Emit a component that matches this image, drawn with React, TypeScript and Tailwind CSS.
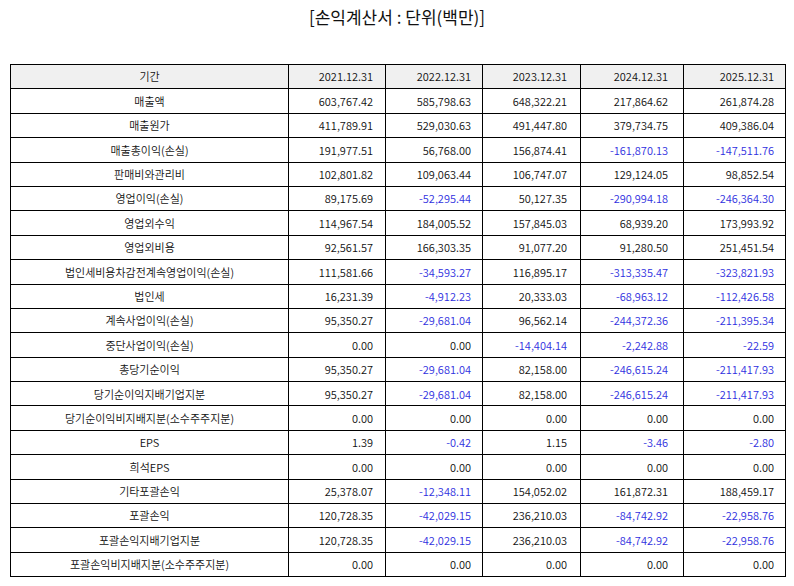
const ROWS: [string, string[]][] = [
  ["매출액", ["603,767.42", "585,798.63", "648,322.21", "217,864.62", "261,874.28"]],
  ["매출원가", ["411,789.91", "529,030.63", "491,447.80", "379,734.75", "409,386.04"]],
  ["매출총이익(손실)", ["191,977.51", "56,768.00", "156,874.41", "-161,870.13", "-147,511.76"]],
  ["판매비와관리비", ["102,801.82", "109,063.44", "106,747.07", "129,124.05", "98,852.54"]],
  ["영업이익(손실)", ["89,175.69", "-52,295.44", "50,127.35", "-290,994.18", "-246,364.30"]],
  ["영업외수익", ["114,967.54", "184,005.52", "157,845.03", "68,939.20", "173,993.92"]],
  ["영업외비용", ["92,561.57", "166,303.35", "91,077.20", "91,280.50", "251,451.54"]],
  ["법인세비용차감전계속영업이익(손실)", ["111,581.66", "-34,593.27", "116,895.17", "-313,335.47", "-323,821.93"]],
  ["법인세", ["16,231.39", "-4,912.23", "20,333.03", "-68,963.12", "-112,426.58"]],
  ["계속사업이익(손실)", ["95,350.27", "-29,681.04", "96,562.14", "-244,372.36", "-211,395.34"]],
  ["중단사업이익(손실)", ["0.00", "0.00", "-14,404.14", "-2,242.88", "-22.59"]],
  ["총당기순이익", ["95,350.27", "-29,681.04", "82,158.00", "-246,615.24", "-211,417.93"]],
  ["당기순이익지배기업지분", ["95,350.27", "-29,681.04", "82,158.00", "-246,615.24", "-211,417.93"]],
  ["당기순이익비지배지분(소수주주지분)", ["0.00", "0.00", "0.00", "0.00", "0.00"]],
  ["EPS", ["1.39", "-0.42", "1.15", "-3.46", "-2.80"]],
  ["희석EPS", ["0.00", "0.00", "0.00", "0.00", "0.00"]],
  ["기타포괄손익", ["25,378.07", "-12,348.11", "154,052.02", "161,872.31", "188,459.17"]],
  ["포괄손익", ["120,728.35", "-42,029.15", "236,210.03", "-84,742.92", "-22,958.76"]],
  ["포괄손익지배기업지분", ["120,728.35", "-42,029.15", "236,210.03", "-84,742.92", "-22,958.76"]],
  ["포괄손익비지배지분(소수주주지분)", ["0.00", "0.00", "0.00", "0.00", "0.00"]],
];

const YEARS = ["2021.12.31", "2022.12.31", "2023.12.31", "2024.12.31", "2025.12.31"];
const PAD = ["pr-[12px]", "pr-[11px]", "pr-[13px]", "pr-[15px]", "pr-[11px]"];

export default function App() {
  return (
    <div className="w-[794px] h-[586px] bg-white text-[#111] font-['Noto_Sans_CJK_KR','Noto_Sans',sans-serif] font-[350]">
      <h1 className="pt-[5px] text-center text-[17px] leading-[24px] font-normal">
        [손익계산서 : 단위(백만)]
      </h1>
      <table className="mt-[35px] ml-[10px] w-[775px] table-fixed border-collapse text-[11px]">
        <colgroup>
          <col className="w-[278px]" />
          <col className="w-[97px]" />
          <col className="w-[97px]" />
          <col className="w-[98px]" />
          <col className="w-[103px]" />
          <col className="w-[102px]" />
        </colgroup>
        <thead>
          <tr className="h-[24.4px] bg-[#f0f0f0]">
            <th className="border border-black p-0 text-center font-[350]">기간</th>
            {YEARS.map((y, i) => (
              <th key={y} className={`border border-black p-0 text-right font-[350] ${PAD[i]}`}>
                {y}
              </th>
            ))}
          </tr>
        </thead>
        <tbody>
          {ROWS.map(([label, vals]) => (
            <tr key={label} className="h-[24.4px]">
              <td className="border border-black p-0 text-center">{label}</td>
              {vals.map((v, i) => (
                <td
                  key={i}
                  className={`border border-black p-0 text-right ${PAD[i]} ${
                    v.startsWith("-") ? "text-[#3030e0]" : ""
                  }`}
                >
                  {v}
                </td>
              ))}
            </tr>
          ))}
        </tbody>
      </table>
    </div>
  );
}
